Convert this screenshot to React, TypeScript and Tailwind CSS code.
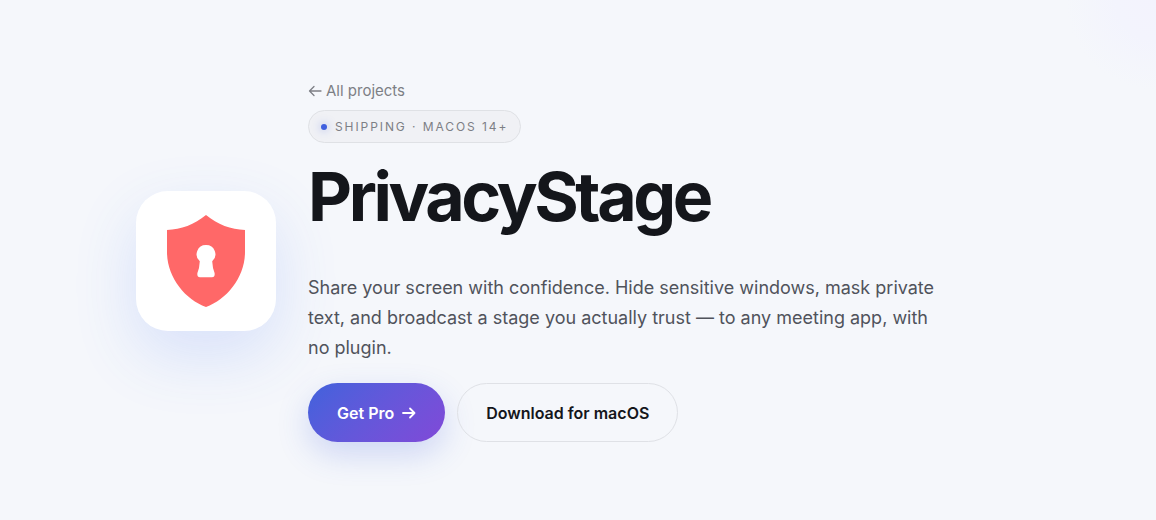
function ShieldIcon() {
  return (
    <svg viewBox="0 0 140 140" className="size-full" aria-hidden="true">
      <path
        d="M70 24C81.500 33.500 95 38.500 109 39V61C109 86 91 108.500 70 116C49 108.500 31 86 31 61V39C45 38.500 58.500 33.500 70 24Z"
        fill="#ff6868"
      />
      <path
        d="M70 54A9.300 9.300 0 0 1 76.200 70.300Q76.500 77 78.600 82Q79.200 86.200 76 86.200H64Q60.800 86.200 61.400 82Q63.500 77 63.800 70.300A9.300 9.300 0 0 1 70 54Z"
        fill="#fff"
      />
    </svg>
  );
}

function Arrow({ className }: { className: string }) {
  return (
    <svg
      viewBox="0 0 14 12"
      fill="none"
      stroke="currentColor"
      strokeLinecap="round"
      strokeLinejoin="round"
      className={className}
      aria-hidden="true"
    >
      <path d="M1 6H12.500M8 1.500L12.500 6L8 10.500" />
    </svg>
  );
}

export default function App() {
  return (
    <main className="min-h-screen bg-[#f5f7fb] bg-[radial-gradient(circle_at_top_right,#f3f3fd_0,#f3f4fd_40px,#f5f7fb_90px)] px-6 py-20 font-['Inter',sans-serif] text-[#14161b] antialiased">
      <section className="mx-auto flex max-w-[884px] flex-col items-start gap-8 sm:flex-row sm:items-center">
        <div className="size-[140px] shrink-0 rounded-[32px] bg-white shadow-[0_24px_64px_rgba(60,110,250,0.16)]">
          <ShieldIcon />
        </div>
        <div className="min-w-0 flex-1">
          <a href="#projects" className="flex w-fit items-center gap-1 text-[15px] leading-[22px] text-[#7d7f85]">
            <Arrow className="h-3 w-3.5 rotate-180 stroke-[1.3]" />
            All projects
          </a>
          <p className="mt-2 flex h-[33px] w-fit items-center gap-2 rounded-full border border-[#dfe1e5] bg-[#f0f1f5] px-3 text-xs tracking-[0.16em] text-[#7d7f85] uppercase">
            <span className="size-1.5 rounded-full bg-[#3f5fdf] shadow-[0_0_8px_rgba(63,95,223,0.5)]" />
            Shipping · macOS 14+
          </p>
          <h1 className="mt-4 text-[68px] leading-[74px] font-bold tracking-[-0.05em]">PrivacyStage</h1>
          <p className="mt-10 max-w-[640px] text-lg leading-[30px] text-[#50535b]">
            Share your screen with confidence. Hide sensitive windows, mask private text, and broadcast a stage you
            actually trust — to any meeting app, with no plugin.
          </p>
          <div className="mt-5 flex flex-wrap gap-3">
            <a
              href="#pro"
              className="flex h-[59px] items-center gap-2 rounded-full bg-linear-135 from-[#3f62dc] to-[#8049d8] px-[29px] text-base font-semibold text-white shadow-[0_12px_32px_rgba(63,95,223,0.22)]"
            >
              Get Pro
              <Arrow className="h-3 w-3.5 stroke-[1.8]" />
            </a>
            <a
              href="#download"
              className="flex h-[59px] items-center rounded-full border border-[#dfe1e6] px-7 text-base font-semibold"
            >
              Download for macOS
            </a>
          </div>
        </div>
      </section>
    </main>
  );
}
